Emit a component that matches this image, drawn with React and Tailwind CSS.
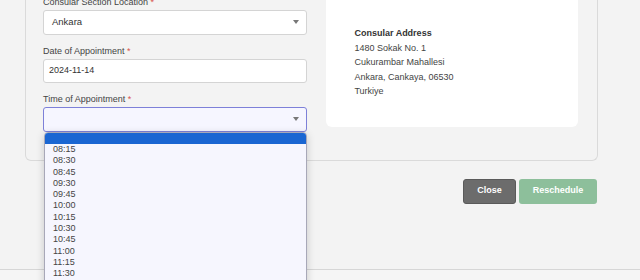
import React from 'react';

const times = ['08:15', '08:30', '08:45', '09:30', '09:45', '10:00', '10:15', '10:30', '10:45', '11:00', '11:15', '11:30', '11:45'];

const Caret = () => (
  <span className="w-0 h-0 border-l-[3px] border-r-[3px] border-t-[4px] border-l-transparent border-r-transparent border-t-[#777]" />
);

const Label = ({ children }) => (
  <div className="text-[9px] leading-[12px] text-[#444]">
    {children} <span className="text-[#d9534f]">*</span>
  </div>
);

const App = () => {
  return (
    <div
      className="w-[640px] h-[280px] overflow-hidden bg-[#f3f3f3] flex flex-col"
      style={{ fontFamily: '"Liberation Sans", Arial, sans-serif' }}
    >
      {/* Form panel */}
      <div className="ml-[25px] w-[573px] -mt-[12px] border border-t-0 border-[#dadada] rounded-b-[6px] flex gap-[19px] pl-[17px] pr-[19px] pb-[28px]">
        {/* Left column */}
        <div className="w-[265px] pt-[8px] flex flex-col">
          <Label>Consular Section Location</Label>
          <div className="mt-[2px] h-[24.5px] bg-white border border-[#d4d4d4] rounded-[3px] flex items-center justify-between pl-[8px] pr-[7px]">
            <span className="text-[9.5px] text-[#333]">Ankara</span>
            <Caret />
          </div>

          <div className="mt-[10px]">
            <Label>Date of Appointment</Label>
          </div>
          <div className="mt-[2px] h-[24.5px] bg-white border border-[#d4d4d4] rounded-[3px] flex items-center pl-[5px]">
            <span className="text-[9px] text-[#333]">2024-11-14</span>
          </div>

          <div className="mt-[10px]">
            <Label>Time of Appointment</Label>
          </div>
          <div className="relative mt-[2px]">
            <div className="h-[24.5px] bg-[#f6f6ff] border border-[#7d80d8] rounded-[3px] flex items-center justify-end pr-[7px]">
              <Caret />
            </div>
            {/* Open option list */}
            <div className="absolute left-[1px] top-[25px] w-[263px] h-[160px] bg-[#f6f6fe] border border-[#a8a8b8] rounded-[4px] shadow-[0_2px_8px_rgba(0,0,0,0.18)] overflow-hidden z-10">
              <div className="h-[11px] bg-[#1a66d2]" />
              <div>
                {times.map((t) => (
                  <div key={t} className="pl-[8px] text-[9px] leading-[11.3px] text-[#444]">
                    {t}
                  </div>
                ))}
              </div>
            </div>
          </div>
        </div>

        {/* Address card */}
        <div className="w-[252px] h-[139px] bg-white rounded-b-[6px] pl-[28px] pt-[38px] text-[9px] leading-[14.6px] text-[#444]">
          <div className="font-bold text-[#333]">Consular Address</div>
          <div>1480 Sokak No. 1</div>
          <div>Cukurambar Mahallesi</div>
          <div>Ankara, Cankaya, 06530</div>
          <div>Turkiye</div>
        </div>
      </div>

      {/* Actions */}
      <div className="mt-[18px] flex justify-end gap-[3px] pr-[43px]">
        <button className="w-[53px] h-[25px] bg-[#6c6c6c] border border-[#5a5a5a] rounded-[3px] text-white text-[9px] font-bold">
          Close
        </button>
        <button className="w-[78px] h-[25px] bg-[#8dbf9b] rounded-[3px] text-white text-[9px] font-bold">
          Reschedule
        </button>
      </div>

      <div className="mt-[65px] border-t border-[#d6d6d6] flex-1 bg-[#f5f5f5]" />
    </div>
  );
};

export default App;
